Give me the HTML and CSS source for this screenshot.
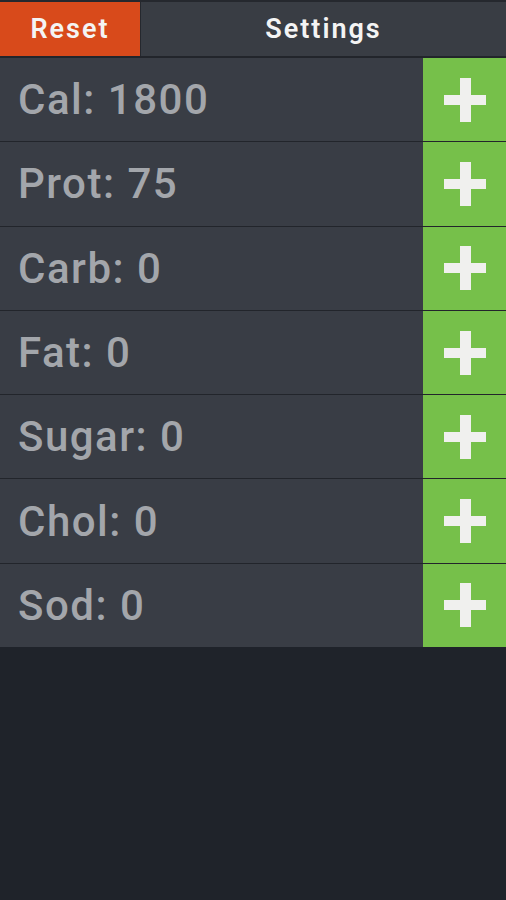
FILE: index.html
```html
<!DOCTYPE html>
<html lang="en">
<head>
  <meta charset="UTF-8">
  <title>Nutrition Tracker</title>
  <link rel="stylesheet" href="styles.css">
</head>
<body>

  <div class="topbar">
    <button class="reset">Reset</button>
    <button class="settings">Settings</button>
  </div>

  <div class="list">
    <div class="row"><span class="label">Cal: 1800</span><button class="add"><span class="plus"></span></button></div>
    <div class="row"><span class="label">Prot: 75</span><button class="add"><span class="plus"></span></button></div>
    <div class="row"><span class="label">Carb: 0</span><button class="add"><span class="plus"></span></button></div>
    <div class="row"><span class="label">Fat: 0</span><button class="add"><span class="plus"></span></button></div>
    <div class="row"><span class="label">Sugar: 0</span><button class="add"><span class="plus"></span></button></div>
    <div class="row"><span class="label">Chol: 0</span><button class="add"><span class="plus"></span></button></div>
    <div class="row"><span class="label">Sod: 0</span><button class="add"><span class="plus"></span></button></div>
  </div>

</body>
</html>
```

FILE: styles.css
```css
body {
  margin: 0;
  font-family: Roboto, "Liberation Sans", sans-serif;
  background-color: #1f232a;
  height: 900px;
}

.topbar {
  display: flex;
  height: 54px;
  padding-top: 2px;
  gap: 1px;
  background-color: #25282e;
}

button {
  border: none;
  font-family: inherit;
  cursor: pointer;
}

.reset {
  width: 140px;
  background-color: #d84a1b;
  color: #f4f4f4;
  font-size: 27px;
  font-weight: 600;
  letter-spacing: 2px;
}

.settings {
  flex: 1;
  background-color: #393d44;
  color: #f4f4f4;
  font-size: 27px;
  font-weight: 600;
  letter-spacing: 2px;
}

.list {
  display: flex;
  flex-direction: column;
  gap: 1px;
  padding-top: 2px;
  background-color: #22252b;
}

.row {
  display: flex;
  height: 83.3px;
  background-color: #393d45;
}

.label {
  flex: 1;
  display: flex;
  align-items: center;
  padding-left: 18px;
  color: #a3a6ab;
  font-size: 42px;
  font-weight: 500;
  letter-spacing: 1.5px;
}

.add {
  width: 83px;
  padding: 0;
  margin-left: 1px;
  background-color: #76c04a;
  display: flex;
  align-items: center;
  justify-content: center;
}

.plus {
  position: relative;
  width: 42px;
  height: 44px;
}

.plus::before,
.plus::after {
  content: "";
  position: absolute;
  background-color: #f0f0ee;
}

.plus::before {
  left: 0;
  right: 0;
  top: 17px;
  height: 10px;
}

.plus::after {
  top: 0;
  bottom: 0;
  left: 16px;
  width: 11px;
}
```
